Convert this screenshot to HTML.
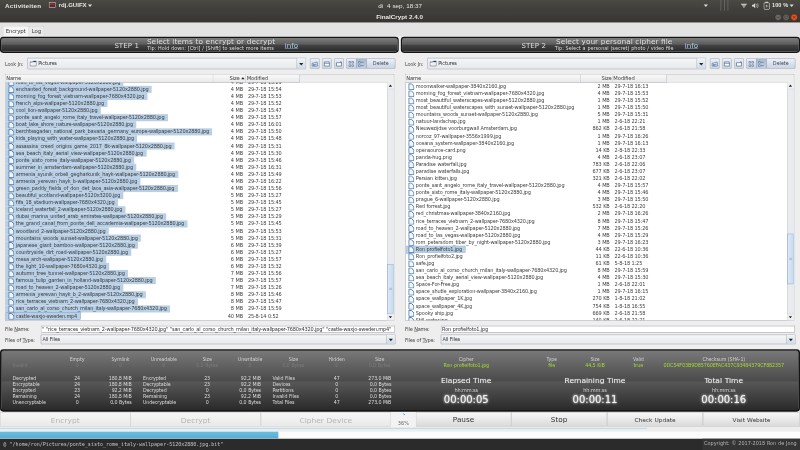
<!DOCTYPE html><html><head><meta charset="utf-8"><title>FinalCrypt 2.4.0</title><style>
*{box-sizing:border-box;margin:0;padding:0}
html,body{width:800px;height:450px;overflow:hidden;background:#eee}
#root{position:absolute;left:0;top:0;width:1920px;height:1080px;transform:scale(0.4166667);transform-origin:0 0;filter:brightness(1);background:#eeeeee;font-family:"DejaVu Sans","Liberation Sans",sans-serif;font-size:12px;color:#333;letter-spacing:-0.4px;word-spacing:0.6px;overflow:hidden}
#root div,#root span,#root svg{position:absolute}
.top{left:0;top:0;width:1920px;height:54.5px;background:linear-gradient(#4b4944,#3f3d39 49%,#413f3b 51%,#363431)}
.top span{color:#e8e6e1;font-size:14px;font-weight:bold;letter-spacing:0;white-space:nowrap;font-family:"Liberation Sans","DejaVu Sans",sans-serif}
.tab{top:62px;height:26px;border:1px solid #c2c2c2;border-bottom:none;border-radius:3px 3px 0 0;background:#e9e9e9;font-size:13px;text-align:center;line-height:25px;color:#383838;letter-spacing:-0.3px}
.tab.a{background:#f5f5f5}
.step{top:88px;height:39px;border-radius:8px;border:3.5px solid #141414;background:linear-gradient(#7e7e7e,#5c5c5c 46%,#424242 54%,#2a2a2a)}
.step span{margin:-0.5px 0 0 -1.5px;color:#dedede;white-space:nowrap;letter-spacing:0}
.ch{top:0;width:960px;height:830px}
.lbl{white-space:nowrap;color:#484848;line-height:14px;letter-spacing:-0.5px}
.combo{border:1.5px solid #7f868f;border-radius:1px;background:linear-gradient(#f5f6f7,#e6e8eb);box-shadow:inset 0 0 0 1px #fafafa}
.combo span{left:25px;top:50%;margin-top:-8px;line-height:15px;white-space:nowrap}
.combo .fold{left:4px;top:5px;width:17px;height:15px}
.cbtn{right:0;top:0;bottom:0;width:21px;border-left:1px solid #9aa7b8;background:linear-gradient(#f2f5f8,#cfd9e5)}
.cbtn i{position:absolute;left:5px;top:50%;margin-top:-2px;border:5px solid transparent;border-top:6px solid #222;border-bottom:none}
.tb{border:1px solid #8492a6;border-radius:2px;background:linear-gradient(#eef2f7,#d9e2ec 50%,#c9d5e3)}
.tb.sel{background:linear-gradient(#a9bbd2,#c3d1e2)}
.tb svg{left:1px;top:3px;width:19px;height:19px}
.tb span{left:0;right:0;top:4px;text-align:center;line-height:15px;font-size:11px;color:#3c3c3c;letter-spacing:.2px}
.tbl{background:#fff;border:1px solid #8f959d;overflow:hidden}
.th{top:0;height:19px;border-right:1px solid #a9b0ba;border-bottom:1px solid #a9b0ba;background:linear-gradient(#fafafa,#e9e9e9);padding:0 1px 0 2px;font-size:12.5px;line-height:17px;white-space:nowrap;color:#3c3c3c;letter-spacing:-0.3px}
.ar{display:inline-block;margin:0 1px 2px 4px;border:4px solid transparent;border-bottom:5px solid #222;border-top:none;vertical-align:middle}
.hs{left:0;right:0;top:0;height:19px;background:#eee;border-bottom:1px solid #c4c8ce}
.rows{left:0;top:19px;width:918px;bottom:0;overflow:hidden}
.r{left:0;width:918px;height:17px}
.r .fi{left:6.5px;top:.5px;width:14.5px;height:16.5px}
.r span{top:0;height:17px;line-height:17px;white-space:nowrap;color:#3e3e3e}
.r .n{left:21px;padding:0 8px 0 4px}
.r .n.s{background:#b8cfe5}
.r .n.s:before{content:"";position:absolute;left:-21px;top:0;width:21px;height:17px;background:#b8cfe5;z-index:0}
.r .fi{z-index:1}
.r .n.f{outline:1px solid #6382bf;outline-offset:-1px}
.r .n.f:before{border:1px solid #6382bf;border-right:none}
.r .n.f2{outline:1px solid #9db8d8;outline-offset:-1px}
.r .n.f2:before{border:1px solid #9db8d8;border-right:none}
.sb{right:0;top:19px;bottom:0;width:16px;background:#e9ebee;border-left:1px solid #b9bfc8}
.sa{left:0;width:15px;height:16px;background:#f0f0f0;border-bottom:1px solid #c5cad2}
.sa.up{top:0}.sa.dn{bottom:0}
.sa i{position:absolute;left:3px;border:4px solid transparent}
.sa.dn{border-bottom:none;border-top:1px solid #c5cad2}
.sa.up i{top:5px;border-bottom:5px solid #222;border-top:none}
.sa.dn i{bottom:5px;border-top:5px solid #222;border-bottom:none}
.thumb{left:0;width:15px;border:1px solid #7f9bc4;background:linear-gradient(90deg,#dbe8f8,#c8dbf2)}
.thumb b{position:absolute;left:3px;right:3px;top:50%;height:5px;margin-top:-3px;border-top:1px solid #7f95b3;border-bottom:1px solid #7f95b3}
.tf{border:1.5px solid #7f868f;background:#fff;clip-path:inset(-4px 0)}
.tf span{left:2px;top:1px;line-height:15px;white-space:nowrap;letter-spacing:-0.43px}
.stat{top:837.5px;height:150.5px;border-radius:8px;border:4px solid #161616;background:linear-gradient(#787878,#4a4a4a 51%,#585858 52%,#2a2a2a)}
.stat span{margin:-1.5px 0 0 -2px;white-space:nowrap;color:#dadada;font-size:11.4px;line-height:15px;letter-spacing:-0.3px}
.stat.sl span{margin-left:0}
.step.sl span{margin-left:.5px}
.stat .h{color:#cfcfcf}
.stat .d{color:#7a7a7a}
.stat .g{color:#a4d630;font-size:11.7px}
.stat .c{transform:translateX(-50%)}
.stat .rr{transform:translateX(-100%)}
.big{font-size:18px !important;line-height:26px !important;letter-spacing:0 !important;color:#ededed !important;text-shadow:0 0 3px rgba(255,255,255,.45)}
.clock{font-size:24px !important;line-height:30px !important;letter-spacing:0 !important;color:#f2f2f2 !important;text-shadow:0 0 7px rgba(255,255,255,.95),0 0 3px rgba(255,255,255,.6)}
.btn{top:990px;height:34px;border:1px solid #c9c9c9;background:linear-gradient(#f6f6f6,#e9e9e9);text-align:center;line-height:33px;font-size:18px;color:#b5b5b5;letter-spacing:0}
.btn.en{color:#333;font-size:17.5px;border-color:#bdbdbd;background:linear-gradient(#f7f7f7,#dadada)}
.btn.sm{color:#333;font-size:14px;border-color:#bdbdbd;background:linear-gradient(#f7f7f7,#dadada)}
.status{left:0;top:1052.5px;width:1920px;height:27.5px;background:#2b2b2b}
</style></head><body><div id="root">
<div class="top">
<span style="left:12px;top:4px;font-size:15px;letter-spacing:.5px">Activiteiten</span>
<svg style="left:117px;top:5px;width:17px;height:14px" viewBox="0 0 17 14"><rect x="1" y="1" width="15" height="12" fill="#5e2828" stroke="#c9bcbc" stroke-width="1.5"/><rect x="3" y="3" width="11" height="4" fill="#7d3838"/></svg>
<span style="left:141px;top:4px;font-size:14.5px">rdj.GUIFX</span>
<i style="position:absolute;left:211px;top:11px;border:5px solid transparent;border-top:6px solid #ddd;border-bottom:none"></i>
<span id="dt" style="left:960px;transform:translateX(-50%);top:4px;font-size:15px;font-weight:normal;white-space:pre;letter-spacing:0">di  4 sep, 18:37</span>
<span id="ttl" style="left:959px;transform:translateX(-50%);top:31px;font-size:15px">FinalCrypt 2.4.0</span>
<i style="position:absolute;left:1689px;top:11px;border:5px solid transparent;border-top:6px solid #ddd;border-bottom:none"></i>
<div style="left:1729px;top:0;width:2px;height:26px;background:#6a6864"></div><div style="left:1738px;top:0;width:2px;height:26px;background:#6a6864"></div><div style="left:1746px;top:0;width:2px;height:26px;background:#6a6864"></div>
<svg style="left:1777px;top:7px;width:17px;height:13px" viewBox="0 0 22 17"><path d="M1 3h20l-10 13z" fill="#dcdad5"/><path d="M3 7h16M6 11h10" stroke="#3b3935" stroke-width="1.5"/></svg>
<svg style="left:1804px;top:6px;width:17px;height:15px" viewBox="0 0 20 17"><path d="M1 6h4l5-5v15l-5-5H1z" fill="#dcdad5"/><path d="M13 4a6 6 0 0 1 0 9M16 2a9 9 0 0 1 0 13" stroke="#dcdad5" stroke-width="1.6" fill="none"/></svg>
<svg style="left:1832px;top:3px;width:16px;height:21px" viewBox="0 0 16 21"><rect x="1.500" y="3.500" width="13" height="16" rx="2" fill="none" stroke="#dcdad5" stroke-width="1.6"/><rect x="5" y="1" width="6" height="3" fill="#dcdad5"/><path d="M9 7l-4 5h3l-1 4 4-5H8z" fill="#dcdad5"/></svg>
<span style="left:1853px;top:5px;font-size:13.5px">100 %</span>
<i style="position:absolute;left:1895px;top:11px;border:5px solid transparent;border-top:6px solid #ddd;border-bottom:none"></i>
<svg style="left:1856px;top:31px;width:62px;height:20px" viewBox="0 0 62 20"><circle cx="11.500" cy="10.500" r="7.500" fill="#6b6963" stroke="#2b2a27"/><path d="M8 10.500h7" stroke="#3b3935" stroke-width="1.5"/><circle cx="30.700" cy="10.500" r="7.500" fill="#6b6963" stroke="#2b2a27"/><rect x="27.500" y="7.500" width="6.500" height="6" fill="none" stroke="#3b3935" stroke-width="1.300"/><circle cx="50" cy="10.500" r="7.500" fill="#e8541f" stroke="#7a2a0a"/><path d="M47 7.500l6 6m0-6l-6 6" stroke="#5a2008" stroke-width="1.500"/></svg>
</div>
<div style="left:0;top:54px;width:1920px;height:34px;background:#e3e3e3;border-bottom:1px solid #efefef"></div>
<div class="tab a" style="left:7px;width:61px">Encrypt</div><div class="tab" style="left:69px;width:37px">Log</div>
<div class="step sl" style="left:0;width:957px"><span style="left:271px;top:8px;font-size:17px;line-height:20px">STEP 1</span><span style="left:349px;top:-2px;font-size:17.8px;line-height:22px">Select items to encrypt or decrypt</span><span style="left:350px;top:19px;font-size:11.8px;line-height:14px">Tip: Hold down: [Ctrl] / [Shift] to select more items</span><span style="left:680px;top:7px;font-size:17px;line-height:22px;color:#a9cdf0;text-decoration:underline">info</span></div>
<div class="step" style="left:962px;width:958px"><span style="left:288px;top:8px;font-size:17px;line-height:20px">STEP 2</span><span style="left:371px;top:-2px;font-size:17.8px;line-height:22px">Select your personal cipher file</span><span style="left:368px;top:19px;font-size:11.8px;line-height:14px">Tip: Select a personal (secret) photo / video file</span><span style="left:680px;top:7px;font-size:17px;line-height:22px;color:#a9cdf0;text-decoration:underline">info</span></div>
<div class="ch" style="left:0px">
<div class="lbl" style="left:12px;top:147px">Look <u>I</u>n:</div>
<div class="combo" style="left:66px;top:139px;width:668px;height:27px"><svg class="fold" viewBox="0 0 16 14"><path d="M1 3.500h6.500l1.500-2.500h6v11.500H1z" fill="#cfdbe8" stroke="#46505c" stroke-width="1.400"/><path d="M9 1h6v2.500H8z" fill="#3c444e"/><path d="M2 5h12v6.500H2z" fill="#eef3f8"/></svg><span>Pictures</span><div class="cbtn"><i></i></div></div>
<div class="tb" style="left:744px;top:140px;width:23px;height:25px"><svg viewBox="0 0 19 19"><path d="M3.500 7.500h5l1.500-2h5.500v9h-12z" fill="#fff" stroke="#34568a" stroke-width="1.400"/><path d="M5 10h5v4h-5z" fill="#5b7fb5"/><path d="M11.500 13v-4m-1.800 1.800l1.800-1.800 1.800 1.800" stroke="#34568a" stroke-width="1.300" fill="none"/></svg></div>
<div class="tb" style="left:773px;top:140px;width:23px;height:25px"><svg viewBox="0 0 19 19"><path d="M3.500 4.500h12v10h-12z" fill="#fff" stroke="#34568a" stroke-width="1.400"/><path d="M3.500 8h12" stroke="#34568a" stroke-width="1.400"/></svg></div>
<div class="tb" style="left:802px;top:140px;width:23px;height:25px"><svg viewBox="0 0 19 19"><path d="M3.500 6.500h7.500l1.500-2h3v10h-12z" fill="#fff" stroke="#34568a" stroke-width="1.400"/><path d="M12 6.500h3.500" stroke="#34568a" stroke-width="1.400"/></svg></div>
<div class="tb" style="left:831px;top:140px;width:25px;height:25px"><svg viewBox="0 0 19 19"><path d="M4.500 3.500h4v4h-4zM11.500 3.500h4v4h-4zM4.500 11.500h4v4h-4zM11.500 11.500h4v4h-4z" fill="#fff" stroke="#34568a" stroke-width="1.300"/></svg></div>
<div class="tb sel" style="left:855px;top:140px;width:25px;height:25px"><svg viewBox="0 0 19 19"><path d="M3.500 3.500h4v4h-4zM3.500 11.500h4v4h-4z" fill="#fff" stroke="#34568a" stroke-width="1.300"/><path d="M9 5.500h7M9 13.500h7" stroke="#34568a" stroke-width="1.300"/></svg></div>
<div class="tb" style="left:879px;top:140px;width:70px;height:25px"><span>Delete</span></div>
<div class="tbl" style="left:12px;top:178px;width:934px;height:592px">
<div class="hs"></div>
<div class="th" style="left:0;width:499px">Name</div>
<div class="th" style="left:499px;width:78px;text-align:right">Size<i class="ar"></i></div>
<div class="th" style="left:577px;width:130px">Modified</div>
<div class="rows">
<div class="r" style="top:-9.00px"><svg class="fi" viewBox="0 0 13 15" preserveAspectRatio="none"><path d="M1 1h5.500l5.500 5.500v7.500H1z" fill="#f1f8fd" stroke="#4a74aa" stroke-width="2.100" stroke-linejoin="round"/></svg><span class="n s">road_to_las_vegas-wallpaper-5120x2880.jpg</span><span class="z" style="right:348px">4 MB</span><span class="m" style="left:582px">29-7-18 15:29</span></div>
<div class="r" style="top:8.00px"><svg class="fi" viewBox="0 0 13 15" preserveAspectRatio="none"><path d="M1 1h5.500l5.500 5.500v7.500H1z" fill="#f1f8fd" stroke="#4a74aa" stroke-width="2.100" stroke-linejoin="round"/></svg><span class="n s">enchanted_forest_background-wallpaper-5120x2880.jpg</span><span class="z" style="right:348px">4 MB</span><span class="m" style="left:582px">29-7-18 15:54</span></div>
<div class="r" style="top:25.00px"><svg class="fi" viewBox="0 0 13 15" preserveAspectRatio="none"><path d="M1 1h5.500l5.500 5.500v7.500H1z" fill="#f1f8fd" stroke="#4a74aa" stroke-width="2.100" stroke-linejoin="round"/></svg><span class="n s">morning_fog_forest_vietnam-wallpaper-7680x4320.jpg</span><span class="z" style="right:348px">4 MB</span><span class="m" style="left:582px">29-7-18 15:53</span></div>
<div class="r" style="top:42.00px"><svg class="fi" viewBox="0 0 13 15" preserveAspectRatio="none"><path d="M1 1h5.500l5.500 5.500v7.500H1z" fill="#f1f8fd" stroke="#4a74aa" stroke-width="2.100" stroke-linejoin="round"/></svg><span class="n s">french_alps-wallpaper-5120x2880.jpg</span><span class="z" style="right:348px">4 MB</span><span class="m" style="left:582px">29-7-18 15:52</span></div>
<div class="r" style="top:59.00px"><svg class="fi" viewBox="0 0 13 15" preserveAspectRatio="none"><path d="M1 1h5.500l5.500 5.500v7.500H1z" fill="#f1f8fd" stroke="#4a74aa" stroke-width="2.100" stroke-linejoin="round"/></svg><span class="n s">cool_lion-wallpaper-5120x2880.jpg</span><span class="z" style="right:348px">4 MB</span><span class="m" style="left:582px">29-7-18 15:47</span></div>
<div class="r" style="top:76.00px"><svg class="fi" viewBox="0 0 13 15" preserveAspectRatio="none"><path d="M1 1h5.500l5.500 5.500v7.500H1z" fill="#f1f8fd" stroke="#4a74aa" stroke-width="2.100" stroke-linejoin="round"/></svg><span class="n s">ponte_sant_angelo_rome_italy_travel-wallpaper-5120x2880.jpg</span><span class="z" style="right:348px">4 MB</span><span class="m" style="left:582px">29-7-18 15:57</span></div>
<div class="r" style="top:93.00px"><svg class="fi" viewBox="0 0 13 15" preserveAspectRatio="none"><path d="M1 1h5.500l5.500 5.500v7.500H1z" fill="#f1f8fd" stroke="#4a74aa" stroke-width="2.100" stroke-linejoin="round"/></svg><span class="n s">boat_lake_shore_nature-wallpaper-5120x2880.jpg</span><span class="z" style="right:348px">4 MB</span><span class="m" style="left:582px">29-7-18 16:01</span></div>
<div class="r" style="top:110.00px"><svg class="fi" viewBox="0 0 13 15" preserveAspectRatio="none"><path d="M1 1h5.500l5.500 5.500v7.500H1z" fill="#f1f8fd" stroke="#4a74aa" stroke-width="2.100" stroke-linejoin="round"/></svg><span class="n s">berchtesgaden_national_park_bavaria_germany_europe-wallpaper-5120x2880.jpg</span><span class="z" style="right:348px">4 MB</span><span class="m" style="left:582px">29-7-18 15:50</span></div>
<div class="r" style="top:127.00px"><svg class="fi" viewBox="0 0 13 15" preserveAspectRatio="none"><path d="M1 1h5.500l5.500 5.500v7.500H1z" fill="#f1f8fd" stroke="#4a74aa" stroke-width="2.100" stroke-linejoin="round"/></svg><span class="n s">kids_playing_with_water-wallpaper-5120x2880.jpg</span><span class="z" style="right:348px">4 MB</span><span class="m" style="left:582px">29-7-18 15:48</span></div>
<div class="r" style="top:144.00px"><svg class="fi" viewBox="0 0 13 15" preserveAspectRatio="none"><path d="M1 1h5.500l5.500 5.500v7.500H1z" fill="#f1f8fd" stroke="#4a74aa" stroke-width="2.100" stroke-linejoin="round"/></svg><span class="n s">assassins_creed_origins_game_2017_8k-wallpaper-5120x2880.jpg</span><span class="z" style="right:348px">4 MB</span><span class="m" style="left:582px">29-7-18 15:31</span></div>
<div class="r" style="top:161.00px"><svg class="fi" viewBox="0 0 13 15" preserveAspectRatio="none"><path d="M1 1h5.500l5.500 5.500v7.500H1z" fill="#f1f8fd" stroke="#4a74aa" stroke-width="2.100" stroke-linejoin="round"/></svg><span class="n s">sea_beach_italy_aerial_view-wallpaper-5120x2880.jpg</span><span class="z" style="right:348px">4 MB</span><span class="m" style="left:582px">29-7-18 15:30</span></div>
<div class="r" style="top:178.00px"><svg class="fi" viewBox="0 0 13 15" preserveAspectRatio="none"><path d="M1 1h5.500l5.500 5.500v7.500H1z" fill="#f1f8fd" stroke="#4a74aa" stroke-width="2.100" stroke-linejoin="round"/></svg><span class="n s">ponte_sisto_rome_italy-wallpaper-5120x2880.jpg</span><span class="z" style="right:348px">4 MB</span><span class="m" style="left:582px">29-7-18 15:46</span></div>
<div class="r" style="top:195.00px"><svg class="fi" viewBox="0 0 13 15" preserveAspectRatio="none"><path d="M1 1h5.500l5.500 5.500v7.500H1z" fill="#f1f8fd" stroke="#4a74aa" stroke-width="2.100" stroke-linejoin="round"/></svg><span class="n s">summer_in_amsterdam-wallpaper-5120x2880.jpg</span><span class="z" style="right:348px">4 MB</span><span class="m" style="left:582px">29-7-18 16:31</span></div>
<div class="r" style="top:212.00px"><svg class="fi" viewBox="0 0 13 15" preserveAspectRatio="none"><path d="M1 1h5.500l5.500 5.500v7.500H1z" fill="#f1f8fd" stroke="#4a74aa" stroke-width="2.100" stroke-linejoin="round"/></svg><span class="n s">armenia_syunik_orbeli_gegharkunik_hayk-wallpaper-5120x2880.jpg</span><span class="z" style="right:348px">4 MB</span><span class="m" style="left:582px">29-7-18 15:49</span></div>
<div class="r" style="top:229.00px"><svg class="fi" viewBox="0 0 13 15" preserveAspectRatio="none"><path d="M1 1h5.500l5.500 5.500v7.500H1z" fill="#f1f8fd" stroke="#4a74aa" stroke-width="2.100" stroke-linejoin="round"/></svg><span class="n s">armenia_yerevan_hayk_b-wallpaper-5120x2880.jpg</span><span class="z" style="right:348px">4 MB</span><span class="m" style="left:582px">29-7-18 16:22</span></div>
<div class="r" style="top:246.00px"><svg class="fi" viewBox="0 0 13 15" preserveAspectRatio="none"><path d="M1 1h5.500l5.500 5.500v7.500H1z" fill="#f1f8fd" stroke="#4a74aa" stroke-width="2.100" stroke-linejoin="round"/></svg><span class="n s">green_paddy_fields_of_don_det_laos_asia-wallpaper-5120x2880.jpg</span><span class="z" style="right:348px">4 MB</span><span class="m" style="left:582px">29-7-18 15:56</span></div>
<div class="r" style="top:263.00px"><svg class="fi" viewBox="0 0 13 15" preserveAspectRatio="none"><path d="M1 1h5.500l5.500 5.500v7.500H1z" fill="#f1f8fd" stroke="#4a74aa" stroke-width="2.100" stroke-linejoin="round"/></svg><span class="n s">beautiful_scotland-wallpaper-5120x3200.jpg</span><span class="z" style="right:348px">5 MB</span><span class="m" style="left:582px">29-7-18 15:27</span></div>
<div class="r" style="top:280.00px"><svg class="fi" viewBox="0 0 13 15" preserveAspectRatio="none"><path d="M1 1h5.500l5.500 5.500v7.500H1z" fill="#f1f8fd" stroke="#4a74aa" stroke-width="2.100" stroke-linejoin="round"/></svg><span class="n s">fifa_18_stadium-wallpaper-7680x4320.jpg</span><span class="z" style="right:348px">5 MB</span><span class="m" style="left:582px">29-7-18 15:45</span></div>
<div class="r" style="top:297.00px"><svg class="fi" viewBox="0 0 13 15" preserveAspectRatio="none"><path d="M1 1h5.500l5.500 5.500v7.500H1z" fill="#f1f8fd" stroke="#4a74aa" stroke-width="2.100" stroke-linejoin="round"/></svg><span class="n s">iceland_waterfall_2-wallpaper-5120x2880.jpg</span><span class="z" style="right:348px">5 MB</span><span class="m" style="left:582px">29-7-18 15:27</span></div>
<div class="r" style="top:314.00px"><svg class="fi" viewBox="0 0 13 15" preserveAspectRatio="none"><path d="M1 1h5.500l5.500 5.500v7.500H1z" fill="#f1f8fd" stroke="#4a74aa" stroke-width="2.100" stroke-linejoin="round"/></svg><span class="n s">dubai_marina_united_arab_emirates-wallpaper-5120x2880.jpg</span><span class="z" style="right:348px">5 MB</span><span class="m" style="left:582px">29-7-18 15:29</span></div>
<div class="r" style="top:331.00px"><svg class="fi" viewBox="0 0 13 15" preserveAspectRatio="none"><path d="M1 1h5.500l5.500 5.500v7.500H1z" fill="#f1f8fd" stroke="#4a74aa" stroke-width="2.100" stroke-linejoin="round"/></svg><span class="n s">the_grand_canal_from_ponte_dell_accademia-wallpaper-5120x2880.jpg</span><span class="z" style="right:348px">5 MB</span><span class="m" style="left:582px">29-7-18 15:45</span></div>
<div class="r" style="top:348.00px"><svg class="fi" viewBox="0 0 13 15" preserveAspectRatio="none"><path d="M1 1h5.500l5.500 5.500v7.500H1z" fill="#f1f8fd" stroke="#4a74aa" stroke-width="2.100" stroke-linejoin="round"/></svg><span class="n s">woodland_2-wallpaper-5120x2880.jpg</span><span class="z" style="right:348px">5 MB</span><span class="m" style="left:582px">29-7-18 15:53</span></div>
<div class="r" style="top:365.00px"><svg class="fi" viewBox="0 0 13 15" preserveAspectRatio="none"><path d="M1 1h5.500l5.500 5.500v7.500H1z" fill="#f1f8fd" stroke="#4a74aa" stroke-width="2.100" stroke-linejoin="round"/></svg><span class="n s">mountains_woods_sunset-wallpaper-5120x2880.jpg</span><span class="z" style="right:348px">5 MB</span><span class="m" style="left:582px">29-7-18 15:31</span></div>
<div class="r" style="top:382.00px"><svg class="fi" viewBox="0 0 13 15" preserveAspectRatio="none"><path d="M1 1h5.500l5.500 5.500v7.500H1z" fill="#f1f8fd" stroke="#4a74aa" stroke-width="2.100" stroke-linejoin="round"/></svg><span class="n s">japanese_giant_bamboo-wallpaper-5120x2880.jpg</span><span class="z" style="right:348px">6 MB</span><span class="m" style="left:582px">29-7-18 15:39</span></div>
<div class="r" style="top:399.00px"><svg class="fi" viewBox="0 0 13 15" preserveAspectRatio="none"><path d="M1 1h5.500l5.500 5.500v7.500H1z" fill="#f1f8fd" stroke="#4a74aa" stroke-width="2.100" stroke-linejoin="round"/></svg><span class="n s">countryside_dirt_road-wallpaper-5120x2880.jpg</span><span class="z" style="right:348px">6 MB</span><span class="m" style="left:582px">29-7-18 15:27</span></div>
<div class="r" style="top:416.00px"><svg class="fi" viewBox="0 0 13 15" preserveAspectRatio="none"><path d="M1 1h5.500l5.500 5.500v7.500H1z" fill="#f1f8fd" stroke="#4a74aa" stroke-width="2.100" stroke-linejoin="round"/></svg><span class="n s">mesa_arch-wallpaper-5120x2880.jpg</span><span class="z" style="right:348px">6 MB</span><span class="m" style="left:582px">29-7-18 15:57</span></div>
<div class="r" style="top:433.00px"><svg class="fi" viewBox="0 0 13 15" preserveAspectRatio="none"><path d="M1 1h5.500l5.500 5.500v7.500H1z" fill="#f1f8fd" stroke="#4a74aa" stroke-width="2.100" stroke-linejoin="round"/></svg><span class="n s">the_light_10-wallpaper-7680x4320.jpg</span><span class="z" style="right:348px">6 MB</span><span class="m" style="left:582px">29-7-18 15:32</span></div>
<div class="r" style="top:450.00px"><svg class="fi" viewBox="0 0 13 15" preserveAspectRatio="none"><path d="M1 1h5.500l5.500 5.500v7.500H1z" fill="#f1f8fd" stroke="#4a74aa" stroke-width="2.100" stroke-linejoin="round"/></svg><span class="n s">autumn_tree_tunnel-wallpaper-5120x2880.jpg</span><span class="z" style="right:348px">7 MB</span><span class="m" style="left:582px">29-7-18 15:56</span></div>
<div class="r" style="top:467.00px"><svg class="fi" viewBox="0 0 13 15" preserveAspectRatio="none"><path d="M1 1h5.500l5.500 5.500v7.500H1z" fill="#f1f8fd" stroke="#4a74aa" stroke-width="2.100" stroke-linejoin="round"/></svg><span class="n s">famous_tulip_garden_in_holland-wallpaper-5120x2880.jpg</span><span class="z" style="right:348px">7 MB</span><span class="m" style="left:582px">29-7-18 15:57</span></div>
<div class="r" style="top:484.00px"><svg class="fi" viewBox="0 0 13 15" preserveAspectRatio="none"><path d="M1 1h5.500l5.500 5.500v7.500H1z" fill="#f1f8fd" stroke="#4a74aa" stroke-width="2.100" stroke-linejoin="round"/></svg><span class="n s">road_to_heaven_2-wallpaper-5120x2880.jpg</span><span class="z" style="right:348px">7 MB</span><span class="m" style="left:582px">29-7-18 15:26</span></div>
<div class="r" style="top:501.00px"><svg class="fi" viewBox="0 0 13 15" preserveAspectRatio="none"><path d="M1 1h5.500l5.500 5.500v7.500H1z" fill="#f1f8fd" stroke="#4a74aa" stroke-width="2.100" stroke-linejoin="round"/></svg><span class="n s">armenia_yerevan_hayk_b_2-wallpaper-5120x2880.jpg</span><span class="z" style="right:348px">8 MB</span><span class="m" style="left:582px">29-7-18 15:46</span></div>
<div class="r" style="top:518.00px"><svg class="fi" viewBox="0 0 13 15" preserveAspectRatio="none"><path d="M1 1h5.500l5.500 5.500v7.500H1z" fill="#f1f8fd" stroke="#4a74aa" stroke-width="2.100" stroke-linejoin="round"/></svg><span class="n s">rice_terraces_vietnam_2-wallpaper-7680x4320.jpg</span><span class="z" style="right:348px">8 MB</span><span class="m" style="left:582px">29-7-18 15:47</span></div>
<div class="r" style="top:535.00px"><svg class="fi" viewBox="0 0 13 15" preserveAspectRatio="none"><path d="M1 1h5.500l5.500 5.500v7.500H1z" fill="#f1f8fd" stroke="#4a74aa" stroke-width="2.100" stroke-linejoin="round"/></svg><span class="n s">san_carlo_al_corso_church_milan_italy-wallpaper-7680x4320.jpg</span><span class="z" style="right:348px">8 MB</span><span class="m" style="left:582px">29-7-18 15:59</span></div>
<div class="r" style="top:552.00px"><svg class="fi" viewBox="0 0 13 15" preserveAspectRatio="none"><path d="M1 1h5.500l5.500 5.500v7.500H1z" fill="#f1f8fd" stroke="#4a74aa" stroke-width="2.100" stroke-linejoin="round"/></svg><span class="n s f">castle-waxjo-sweden.mp4</span><span class="z" style="right:348px">40 MB</span><span class="m" style="left:582px">25-8-14 0:52</span></div>
</div>
<div class="sb"><div class="sa up"><i></i></div><div class="thumb" style="top:436px;height:119px"><b></b></div><div class="sa dn"><i></i></div></div>
</div>
<div class="lbl" style="left:12px;top:783px">File <u>N</u>ame:</div>
<div class="tf" style="left:98px;top:781.5px;width:850px;height:16.5px"><span>" "rice_terraces_vietnam_2-wallpaper-7680x4320.jpg" "san_carlo_al_corso_church_milan_italy-wallpaper-7680x4320.jpg" "castle-waxjo-sweden.mp4"</span></div>
<div class="lbl" style="left:12px;top:809px">Files of <u>T</u>ype:</div>
<div class="combo" style="left:98px;top:803px;width:851px;height:23px"><span style="left:3px;margin-top:-6.5px">All Files</span><div class="cbtn"><i></i></div></div>
</div>
<div class="ch" style="left:960px">
<div class="lbl" style="left:12px;top:147px">Look <u>I</u>n:</div>
<div class="combo" style="left:66px;top:139px;width:668px;height:27px"><svg class="fold" viewBox="0 0 16 14"><path d="M1 3.500h6.500l1.500-2.500h6v11.500H1z" fill="#cfdbe8" stroke="#46505c" stroke-width="1.400"/><path d="M9 1h6v2.500H8z" fill="#3c444e"/><path d="M2 5h12v6.500H2z" fill="#eef3f8"/></svg><span>Pictures</span><div class="cbtn"><i></i></div></div>
<div class="tb" style="left:744px;top:140px;width:23px;height:25px"><svg viewBox="0 0 19 19"><path d="M3.500 7.500h5l1.500-2h5.500v9h-12z" fill="#fff" stroke="#34568a" stroke-width="1.400"/><path d="M5 10h5v4h-5z" fill="#5b7fb5"/><path d="M11.500 13v-4m-1.800 1.800l1.800-1.800 1.800 1.800" stroke="#34568a" stroke-width="1.300" fill="none"/></svg></div>
<div class="tb" style="left:773px;top:140px;width:23px;height:25px"><svg viewBox="0 0 19 19"><path d="M3.500 4.500h12v10h-12z" fill="#fff" stroke="#34568a" stroke-width="1.400"/><path d="M3.500 8h12" stroke="#34568a" stroke-width="1.400"/></svg></div>
<div class="tb" style="left:802px;top:140px;width:23px;height:25px"><svg viewBox="0 0 19 19"><path d="M3.500 6.500h7.500l1.500-2h3v10h-12z" fill="#fff" stroke="#34568a" stroke-width="1.400"/><path d="M12 6.500h3.500" stroke="#34568a" stroke-width="1.400"/></svg></div>
<div class="tb" style="left:831px;top:140px;width:25px;height:25px"><svg viewBox="0 0 19 19"><path d="M4.500 3.500h4v4h-4zM11.500 3.500h4v4h-4zM4.500 11.500h4v4h-4zM11.500 11.500h4v4h-4z" fill="#fff" stroke="#34568a" stroke-width="1.300"/></svg></div>
<div class="tb sel" style="left:855px;top:140px;width:25px;height:25px"><svg viewBox="0 0 19 19"><path d="M3.500 3.500h4v4h-4zM3.500 11.500h4v4h-4z" fill="#fff" stroke="#34568a" stroke-width="1.300"/><path d="M9 5.500h7M9 13.500h7" stroke="#34568a" stroke-width="1.300"/></svg></div>
<div class="tb" style="left:879px;top:140px;width:70px;height:25px"><span>Delete</span></div>
<div class="tbl" style="left:12px;top:178px;width:934px;height:592px">
<div class="hs"></div>
<div class="th" style="left:0;width:421px">Name</div>
<div class="th" style="left:421px;width:76px;text-align:right">Size</div>
<div class="th" style="left:497px;width:130px">Modified</div>
<div class="rows">
<div class="r" style="top:1.00px"><svg class="fi" viewBox="0 0 13 15" preserveAspectRatio="none"><path d="M1 1h5.500l5.500 5.500v7.500H1z" fill="#f1f8fd" stroke="#4a74aa" stroke-width="2.100" stroke-linejoin="round"/></svg><span class="n">moonwalker-wallpaper-3840x2160.jpg</span><span class="z" style="right:428px">2 MB</span><span class="m" style="left:502px">29-7-18 16:13</span></div>
<div class="r" style="top:18.00px"><svg class="fi" viewBox="0 0 13 15" preserveAspectRatio="none"><path d="M1 1h5.500l5.500 5.500v7.500H1z" fill="#f1f8fd" stroke="#4a74aa" stroke-width="2.100" stroke-linejoin="round"/></svg><span class="n">morning_fog_forest_vietnam-wallpaper-7680x4320.jpg</span><span class="z" style="right:428px">4 MB</span><span class="m" style="left:502px">29-7-18 15:53</span></div>
<div class="r" style="top:35.00px"><svg class="fi" viewBox="0 0 13 15" preserveAspectRatio="none"><path d="M1 1h5.500l5.500 5.500v7.500H1z" fill="#f1f8fd" stroke="#4a74aa" stroke-width="2.100" stroke-linejoin="round"/></svg><span class="n">most_beautiful_waterscapes-wallpaper-5120x2880.jpg</span><span class="z" style="right:428px">1 MB</span><span class="m" style="left:502px">29-7-18 15:52</span></div>
<div class="r" style="top:52.00px"><svg class="fi" viewBox="0 0 13 15" preserveAspectRatio="none"><path d="M1 1h5.500l5.500 5.500v7.500H1z" fill="#f1f8fd" stroke="#4a74aa" stroke-width="2.100" stroke-linejoin="round"/></svg><span class="n">most_beautiful_waterscapes_with_sunset-wallpaper-5120x2880.jpg</span><span class="z" style="right:428px">1 MB</span><span class="m" style="left:502px">29-7-18 15:50</span></div>
<div class="r" style="top:69.00px"><svg class="fi" viewBox="0 0 13 15" preserveAspectRatio="none"><path d="M1 1h5.500l5.500 5.500v7.500H1z" fill="#f1f8fd" stroke="#4a74aa" stroke-width="2.100" stroke-linejoin="round"/></svg><span class="n">mountains_woods_sunset-wallpaper-5120x2880.jpg</span><span class="z" style="right:428px">5 MB</span><span class="m" style="left:502px">29-7-18 15:31</span></div>
<div class="r" style="top:86.00px"><svg class="fi" viewBox="0 0 13 15" preserveAspectRatio="none"><path d="M1 1h5.500l5.500 5.500v7.500H1z" fill="#f1f8fd" stroke="#4a74aa" stroke-width="2.100" stroke-linejoin="round"/></svg><span class="n">natuur-landschap.jpg</span><span class="z" style="right:428px">1 MB</span><span class="m" style="left:502px">2-6-18 22:21</span></div>
<div class="r" style="top:103.00px"><svg class="fi" viewBox="0 0 13 15" preserveAspectRatio="none"><path d="M1 1h5.500l5.500 5.500v7.500H1z" fill="#f1f8fd" stroke="#4a74aa" stroke-width="2.100" stroke-linejoin="round"/></svg><span class="n">Nieuwezijdse voorburgwall Amsterdam.jpg</span><span class="z" style="right:428px">862 KB</span><span class="m" style="left:502px">2-6-18 21:58</span></div>
<div class="r" style="top:120.00px"><svg class="fi" viewBox="0 0 13 15" preserveAspectRatio="none"><path d="M1 1h5.500l5.500 5.500v7.500H1z" fill="#f1f8fd" stroke="#4a74aa" stroke-width="2.100" stroke-linejoin="round"/></svg><span class="n">norcoz_97-wallpaper-3556x1999.jpg</span><span class="z" style="right:428px">1 MB</span><span class="m" style="left:502px">29-7-18 16:26</span></div>
<div class="r" style="top:137.00px"><svg class="fi" viewBox="0 0 13 15" preserveAspectRatio="none"><path d="M1 1h5.500l5.500 5.500v7.500H1z" fill="#f1f8fd" stroke="#4a74aa" stroke-width="2.100" stroke-linejoin="round"/></svg><span class="n">oceana_system-wallpaper-3840x2160.jpg</span><span class="z" style="right:428px">1 MB</span><span class="m" style="left:502px">29-7-18 16:13</span></div>
<div class="r" style="top:154.00px"><svg class="fi" viewBox="0 0 13 15" preserveAspectRatio="none"><path d="M1 1h5.500l5.500 5.500v7.500H1z" fill="#f1f8fd" stroke="#4a74aa" stroke-width="2.100" stroke-linejoin="round"/></svg><span class="n">opensource-card.png</span><span class="z" style="right:428px">14 KB</span><span class="m" style="left:502px">2-8-18 22:33</span></div>
<div class="r" style="top:171.00px"><svg class="fi" viewBox="0 0 13 15" preserveAspectRatio="none"><path d="M1 1h5.500l5.500 5.500v7.500H1z" fill="#f1f8fd" stroke="#4a74aa" stroke-width="2.100" stroke-linejoin="round"/></svg><span class="n">panda-hug.png</span><span class="z" style="right:428px">4 MB</span><span class="m" style="left:502px">2-6-18 23:07</span></div>
<div class="r" style="top:188.00px"><svg class="fi" viewBox="0 0 13 15" preserveAspectRatio="none"><path d="M1 1h5.500l5.500 5.500v7.500H1z" fill="#f1f8fd" stroke="#4a74aa" stroke-width="2.100" stroke-linejoin="round"/></svg><span class="n">Paradise waterfall.jpg</span><span class="z" style="right:428px">783 KB</span><span class="m" style="left:502px">2-6-18 22:06</span></div>
<div class="r" style="top:205.00px"><svg class="fi" viewBox="0 0 13 15" preserveAspectRatio="none"><path d="M1 1h5.500l5.500 5.500v7.500H1z" fill="#f1f8fd" stroke="#4a74aa" stroke-width="2.100" stroke-linejoin="round"/></svg><span class="n">paradise waterfalls.jpg</span><span class="z" style="right:428px">677 KB</span><span class="m" style="left:502px">2-6-18 23:07</span></div>
<div class="r" style="top:222.00px"><svg class="fi" viewBox="0 0 13 15" preserveAspectRatio="none"><path d="M1 1h5.500l5.500 5.500v7.500H1z" fill="#f1f8fd" stroke="#4a74aa" stroke-width="2.100" stroke-linejoin="round"/></svg><span class="n">Persian kitten.jpg</span><span class="z" style="right:428px">321 KB</span><span class="m" style="left:502px">2-6-18 22:02</span></div>
<div class="r" style="top:239.00px"><svg class="fi" viewBox="0 0 13 15" preserveAspectRatio="none"><path d="M1 1h5.500l5.500 5.500v7.500H1z" fill="#f1f8fd" stroke="#4a74aa" stroke-width="2.100" stroke-linejoin="round"/></svg><span class="n">ponte_sant_angelo_rome_italy_travel-wallpaper-5120x2880.jpg</span><span class="z" style="right:428px">4 MB</span><span class="m" style="left:502px">29-7-18 15:57</span></div>
<div class="r" style="top:256.00px"><svg class="fi" viewBox="0 0 13 15" preserveAspectRatio="none"><path d="M1 1h5.500l5.500 5.500v7.500H1z" fill="#f1f8fd" stroke="#4a74aa" stroke-width="2.100" stroke-linejoin="round"/></svg><span class="n">ponte_sisto_rome_italy-wallpaper-5120x2880.jpg</span><span class="z" style="right:428px">4 MB</span><span class="m" style="left:502px">29-7-18 15:46</span></div>
<div class="r" style="top:273.00px"><svg class="fi" viewBox="0 0 13 15" preserveAspectRatio="none"><path d="M1 1h5.500l5.500 5.500v7.500H1z" fill="#f1f8fd" stroke="#4a74aa" stroke-width="2.100" stroke-linejoin="round"/></svg><span class="n">prague_6-wallpaper-5120x2880.jpg</span><span class="z" style="right:428px">3 MB</span><span class="m" style="left:502px">29-7-18 15:50</span></div>
<div class="r" style="top:290.00px"><svg class="fi" viewBox="0 0 13 15" preserveAspectRatio="none"><path d="M1 1h5.500l5.500 5.500v7.500H1z" fill="#f1f8fd" stroke="#4a74aa" stroke-width="2.100" stroke-linejoin="round"/></svg><span class="n">Red forrest.jpg</span><span class="z" style="right:428px">532 KB</span><span class="m" style="left:502px">2-6-18 22:20</span></div>
<div class="r" style="top:307.00px"><svg class="fi" viewBox="0 0 13 15" preserveAspectRatio="none"><path d="M1 1h5.500l5.500 5.500v7.500H1z" fill="#f1f8fd" stroke="#4a74aa" stroke-width="2.100" stroke-linejoin="round"/></svg><span class="n">red_christmas-wallpaper-3840x2160.jpg</span><span class="z" style="right:428px">2 MB</span><span class="m" style="left:502px">29-7-18 16:26</span></div>
<div class="r" style="top:324.00px"><svg class="fi" viewBox="0 0 13 15" preserveAspectRatio="none"><path d="M1 1h5.500l5.500 5.500v7.500H1z" fill="#f1f8fd" stroke="#4a74aa" stroke-width="2.100" stroke-linejoin="round"/></svg><span class="n">rice_terraces_vietnam_2-wallpaper-7680x4320.jpg</span><span class="z" style="right:428px">8 MB</span><span class="m" style="left:502px">29-7-18 15:47</span></div>
<div class="r" style="top:341.00px"><svg class="fi" viewBox="0 0 13 15" preserveAspectRatio="none"><path d="M1 1h5.500l5.500 5.500v7.500H1z" fill="#f1f8fd" stroke="#4a74aa" stroke-width="2.100" stroke-linejoin="round"/></svg><span class="n">road_to_heaven_2-wallpaper-5120x2880.jpg</span><span class="z" style="right:428px">7 MB</span><span class="m" style="left:502px">29-7-18 15:26</span></div>
<div class="r" style="top:358.00px"><svg class="fi" viewBox="0 0 13 15" preserveAspectRatio="none"><path d="M1 1h5.500l5.500 5.500v7.500H1z" fill="#f1f8fd" stroke="#4a74aa" stroke-width="2.100" stroke-linejoin="round"/></svg><span class="n">road_to_las_vegas-wallpaper-5120x2880.jpg</span><span class="z" style="right:428px">4 MB</span><span class="m" style="left:502px">29-7-18 15:29</span></div>
<div class="r" style="top:375.00px"><svg class="fi" viewBox="0 0 13 15" preserveAspectRatio="none"><path d="M1 1h5.500l5.500 5.500v7.500H1z" fill="#f1f8fd" stroke="#4a74aa" stroke-width="2.100" stroke-linejoin="round"/></svg><span class="n">rom_petersdom_tiber_by_night-wallpaper-5120x2880.jpg</span><span class="z" style="right:428px">3 MB</span><span class="m" style="left:502px">29-7-18 16:23</span></div>
<div class="r" style="top:392.00px"><svg class="fi" viewBox="0 0 13 15" preserveAspectRatio="none"><path d="M1 1h5.500l5.500 5.500v7.500H1z" fill="#f1f8fd" stroke="#4a74aa" stroke-width="2.100" stroke-linejoin="round"/></svg><span class="n s f2">Ron profielfoto1.jpg</span><span class="z" style="right:428px">44 KB</span><span class="m" style="left:502px">22-6-18 10:36</span></div>
<div class="r" style="top:409.00px"><svg class="fi" viewBox="0 0 13 15" preserveAspectRatio="none"><path d="M1 1h5.500l5.500 5.500v7.500H1z" fill="#f1f8fd" stroke="#4a74aa" stroke-width="2.100" stroke-linejoin="round"/></svg><span class="n">Ron_profielfoto2.jpg</span><span class="z" style="right:428px">11 KB</span><span class="m" style="left:502px">22-6-18 10:36</span></div>
<div class="r" style="top:426.00px"><svg class="fi" viewBox="0 0 13 15" preserveAspectRatio="none"><path d="M1 1h5.500l5.500 5.500v7.500H1z" fill="#f1f8fd" stroke="#4a74aa" stroke-width="2.100" stroke-linejoin="round"/></svg><span class="n">safe.jpg</span><span class="z" style="right:428px">61 KB</span><span class="m" style="left:502px">5-8-18 1:25</span></div>
<div class="r" style="top:443.00px"><svg class="fi" viewBox="0 0 13 15" preserveAspectRatio="none"><path d="M1 1h5.500l5.500 5.500v7.500H1z" fill="#f1f8fd" stroke="#4a74aa" stroke-width="2.100" stroke-linejoin="round"/></svg><span class="n">san_carlo_al_corso_church_milan_italy-wallpaper-7680x4320.jpg</span><span class="z" style="right:428px">8 MB</span><span class="m" style="left:502px">29-7-18 15:59</span></div>
<div class="r" style="top:460.00px"><svg class="fi" viewBox="0 0 13 15" preserveAspectRatio="none"><path d="M1 1h5.500l5.500 5.500v7.500H1z" fill="#f1f8fd" stroke="#4a74aa" stroke-width="2.100" stroke-linejoin="round"/></svg><span class="n">sea_beach_italy_aerial_view-wallpaper-5120x2880.jpg</span><span class="z" style="right:428px">4 MB</span><span class="m" style="left:502px">29-7-18 15:30</span></div>
<div class="r" style="top:477.00px"><svg class="fi" viewBox="0 0 13 15" preserveAspectRatio="none"><path d="M1 1h5.500l5.500 5.500v7.500H1z" fill="#f1f8fd" stroke="#4a74aa" stroke-width="2.100" stroke-linejoin="round"/></svg><span class="n">Space-For-Free.jpg</span><span class="z" style="right:428px">1 MB</span><span class="m" style="left:502px">2-6-18 22:01</span></div>
<div class="r" style="top:494.00px"><svg class="fi" viewBox="0 0 13 15" preserveAspectRatio="none"><path d="M1 1h5.500l5.500 5.500v7.500H1z" fill="#f1f8fd" stroke="#4a74aa" stroke-width="2.100" stroke-linejoin="round"/></svg><span class="n">space_shutle_exploration-wallpaper-3840x2160.jpg</span><span class="z" style="right:428px">1 MB</span><span class="m" style="left:502px">29-7-18 16:15</span></div>
<div class="r" style="top:511.00px"><svg class="fi" viewBox="0 0 13 15" preserveAspectRatio="none"><path d="M1 1h5.500l5.500 5.500v7.500H1z" fill="#f1f8fd" stroke="#4a74aa" stroke-width="2.100" stroke-linejoin="round"/></svg><span class="n">space_wallpaper_1K.jpg</span><span class="z" style="right:428px">270 KB</span><span class="m" style="left:502px">1-8-18 21:02</span></div>
<div class="r" style="top:528.00px"><svg class="fi" viewBox="0 0 13 15" preserveAspectRatio="none"><path d="M1 1h5.500l5.500 5.500v7.500H1z" fill="#f1f8fd" stroke="#4a74aa" stroke-width="2.100" stroke-linejoin="round"/></svg><span class="n">space_wallpaper_4K.jpg</span><span class="z" style="right:428px">754 KB</span><span class="m" style="left:502px">1-8-18 16:55</span></div>
<div class="r" style="top:545.00px"><svg class="fi" viewBox="0 0 13 15" preserveAspectRatio="none"><path d="M1 1h5.500l5.500 5.500v7.500H1z" fill="#f1f8fd" stroke="#4a74aa" stroke-width="2.100" stroke-linejoin="round"/></svg><span class="n">Spooky ship.jpg</span><span class="z" style="right:428px">669 KB</span><span class="m" style="left:502px">2-6-18 21:58</span></div>
<div class="r" style="top:562.00px"><svg class="fi" viewBox="0 0 13 15" preserveAspectRatio="none"><path d="M1 1h5.500l5.500 5.500v7.500H1z" fill="#f1f8fd" stroke="#4a74aa" stroke-width="2.100" stroke-linejoin="round"/></svg><span class="n">Still water.jpg</span><span class="z" style="right:428px">140 KB</span><span class="m" style="left:502px">2-6-18 22:21</span></div>
</div>
<div class="sb"><div class="sa up"><i></i></div><div class="thumb" style="top:363px;height:121px"><b></b></div><div class="sa dn"><i></i></div></div>
</div>
<div class="lbl" style="left:12px;top:783px">File <u>N</u>ame:</div>
<div class="tf" style="left:98px;top:781.5px;width:850px;height:16.5px"><span>Ron profielfoto1.jpg</span></div>
<div class="lbl" style="left:12px;top:809px">Files of <u>T</u>ype:</div>
<div class="combo" style="left:98px;top:803px;width:851px;height:23px"><span style="left:3px;margin-top:-6.5px">All Files</span><div class="cbtn"><i></i></div></div>
</div>
<div class="stat sl" style="left:0;width:1920px">
<span class="h c" style="left:181px;top:15px">Empty</span>
<span class="d c" style="left:181px;top:29px">0</span>
<span class="h c" style="left:285px;top:15px">Symlink</span>
<span class="d c" style="left:285px;top:29px">0</span>
<span class="h c" style="left:389px;top:15px">Unreadable</span>
<span class="d c" style="left:389px;top:29px">0</span>
<span class="h c" style="left:493px;top:15px">Size</span>
<span class="d c" style="left:493px;top:29px">0,0 Bytes</span>
<span class="h c" style="left:596px;top:15px">Unwritable</span>
<span class="d c" style="left:596px;top:29px">0</span>
<span class="h c" style="left:700px;top:15px">Size</span>
<span class="d c" style="left:700px;top:29px">0,0 Bytes</span>
<span class="h c" style="left:804px;top:15px">Hidden</span>
<span class="d c" style="left:804px;top:29px">0</span>
<span class="h c" style="left:907px;top:15px">Size</span>
<span class="d c" style="left:907px;top:29px">0,0 Bytes</span>
<span class="d" style="left:26px;top:29px">Invalid</span>
<span class="" style="left:26px;top:59.5px">Decrypted</span>
<span class="c" style="left:181px;top:59.5px">24</span>
<span class="rr" style="left:312px;top:59.5px">180,8 MiB</span>
<span class="" style="left:339px;top:59.5px">Encrypted</span>
<span class="c" style="left:493px;top:59.5px">23</span>
<span class="rr" style="left:622px;top:59.5px">92,2 MiB</span>
<span class="" style="left:650px;top:59.5px">Valid Files</span>
<span class="c" style="left:804px;top:59.5px">47</span>
<span class="rr" style="left:935px;top:59.5px">273,0 MiB</span>
<span class="" style="left:26px;top:74.5px">Encryptable</span>
<span class="c" style="left:181px;top:74.5px">24</span>
<span class="rr" style="left:312px;top:74.5px">180,8 MiB</span>
<span class="" style="left:339px;top:74.5px">Decryptable</span>
<span class="c" style="left:493px;top:74.5px">23</span>
<span class="rr" style="left:622px;top:74.5px">92,2 MiB</span>
<span class="" style="left:650px;top:74.5px">Devices</span>
<span class="c" style="left:804px;top:74.5px">0</span>
<span class="rr" style="left:935px;top:74.5px">0,0 Bytes</span>
<span class="" style="left:26px;top:89.5px">Encrypted</span>
<span class="c" style="left:181px;top:89.5px">23</span>
<span class="rr" style="left:312px;top:89.5px">92,2 MiB</span>
<span class="" style="left:339px;top:89.5px">Decrypted</span>
<span class="c" style="left:493px;top:89.5px">0</span>
<span class="rr" style="left:622px;top:89.5px">0,0 Bytes</span>
<span class="" style="left:650px;top:89.5px">Partitions</span>
<span class="c" style="left:804px;top:89.5px">0</span>
<span class="rr" style="left:935px;top:89.5px">0,0 Bytes</span>
<span class="" style="left:26px;top:104.5px">Remaining</span>
<span class="c" style="left:181px;top:104.5px">24</span>
<span class="rr" style="left:312px;top:104.5px">180,8 MiB</span>
<span class="" style="left:339px;top:104.5px">Remaining</span>
<span class="c" style="left:493px;top:104.5px">23</span>
<span class="rr" style="left:622px;top:104.5px">92,2 MiB</span>
<span class="" style="left:650px;top:104.5px">Invalid Files</span>
<span class="c" style="left:804px;top:104.5px">0</span>
<span class="rr" style="left:935px;top:104.5px">0,0 Bytes</span>
<span class="" style="left:26px;top:118.6px">Unencryptable</span>
<span class="c" style="left:181px;top:118.6px">0</span>
<span class="rr" style="left:312px;top:118.6px">0,0 Bytes</span>
<span class="" style="left:339px;top:118.6px">Undecryptable</span>
<span class="c" style="left:493px;top:118.6px">0</span>
<span class="rr" style="left:622px;top:118.6px">0,0 Bytes</span>
<span class="" style="left:650px;top:118.6px">Total Files</span>
<span class="c" style="left:804px;top:118.6px">47</span>
<span class="rr" style="left:935px;top:118.6px">273,0 MiB</span>
</div>
<div class="stat" style="left:962px;width:956px;border-color:transparent;background:none">
<span class="h c" style="left:155px;top:15px">Cipher</span>
<span class="g c" style="left:155px;top:29px">Ron profielfoto1.jpg</span>
<span class="h c" style="left:360px;top:15px">Type</span>
<span class="g c" style="left:360px;top:29px">file</span>
<span class="h c" style="left:464px;top:15px">Size</span>
<span class="g c" style="left:464px;top:29px">44,5 KiB</span>
<span class="h c" style="left:568px;top:15px">Valid</span>
<span class="g c" style="left:568px;top:29px">true</span>
<span class="h c" style="left:773px;top:15px">Checksum (SHA-1)</span>
<span class="g c" style="left:773px;top:29px">0DC54F03B9D85760EFAC437C93484379CF882357</span>
<span class="big c" style="left:155px;top:60px">Elapsed Time</span>
<span class="h c" style="left:155px;top:89px;font-size:12px">hh:mm:ss</span>
<span class="clock c" style="left:155px;top:104px">00:00:05</span>
<span class="big c" style="left:464px;top:60px">Remaining Time</span>
<span class="h c" style="left:464px;top:89px;font-size:12px">hh:mm:ss</span>
<span class="clock c" style="left:464px;top:104px">00:00:11</span>
<span class="big c" style="left:773px;top:60px">Total Time</span>
<span class="h c" style="left:773px;top:89px;font-size:12px">hh:mm:ss</span>
<span class="clock c" style="left:773px;top:104px">00:00:16</span>
</div>
<div class="btn " style="left:0px;width:313px">Encrypt</div>
<div class="btn " style="left:313px;width:313px">Decrypt</div>
<div class="btn " style="left:626px;width:312px">Cipher Device</div>
<div class="btn en" style="left:998px;width:229px">Pause</div>
<div class="btn en" style="left:1227px;width:230px">Stop</div>
<div class="btn sm" style="left:1457px;width:230px">Check Update</div>
<div class="btn sm" style="left:1687px;width:233px">Visit Website</div>
<div style="left:938px;top:990px;width:60px;height:34px;background:#f3f3f3"><span style="left:0;width:60px;text-align:center;top:18px;font-size:12px;line-height:15px;color:#666;letter-spacing:0">36%</span><svg style="left:22px;top:2px;width:14px;height:14px" viewBox="0 0 14 14"><path d="M7 1a6 6 0 0 1 5 3" stroke="#3aa0d8" stroke-width="2" fill="none"/></svg></div>
<div style="left:0;top:1034px;width:1920px;height:19px;background:#fcfcfc;border-top:1px solid #d6d6d6"><div style="left:0;top:1px;width:668px;height:15.5px;background:linear-gradient(#6bbddd,#55aed3)"></div></div>
<div style="left:0;top:1026.5px;width:1553px;height:2px;background:#a8d9e9"></div>
<div class="status"><span style="left:8px;top:5px;font:12px 'DejaVu Sans Mono','Liberation Mono',monospace;color:#c4c4c4;letter-spacing:0;white-space:nowrap;line-height:17px">@ "/home/ron/Pictures/ponte_sisto_rome_italy-wallpaper-5120x2880.jpg.bit"</span><div style="right:0;top:0;width:234px;height:28px;background:#343434"></div><span style="right:8px;top:5px;font-size:11.8px;color:#b4b4b4;letter-spacing:0;white-space:nowrap;line-height:15px">Copyright: © 2017-2018 Ron de Jong</span></div>
</div></body></html>
